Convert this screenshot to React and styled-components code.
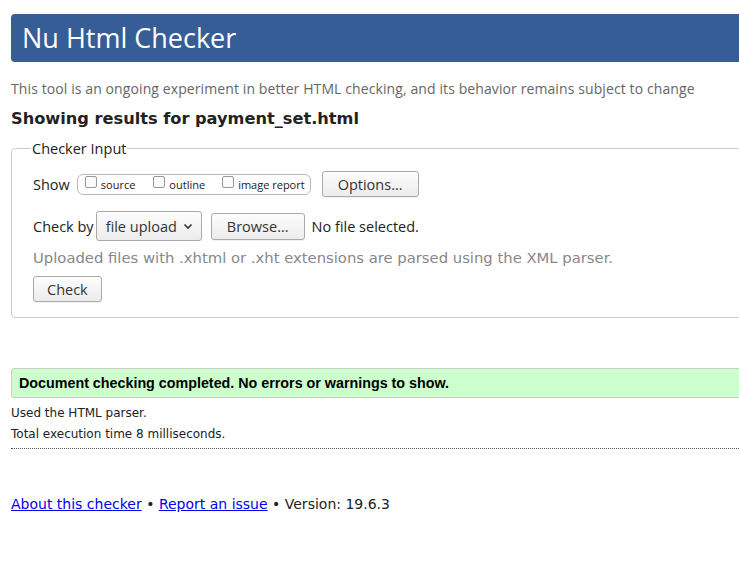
import React from "react";
import styled, { createGlobalStyle } from "styled-components";

const Global = createGlobalStyle`
  html, body { margin: 0; padding: 0; overflow: hidden; background: #fff; }
  body { font-family: "Open Sans", "DejaVu Sans", sans-serif; color: #222; }
`;

const Page = styled.div`
  width: 800px;
  padding: 14px 0 0 11px;
  box-sizing: border-box;
`;

const Header = styled.h1`
  margin: 0;
  height: 48px;
  background: #365d95;
  border-radius: 4px;
  color: #fff;
  font-family: "Open Sans", sans-serif;
  font-weight: 400;
  font-size: 27px;
  line-height: 48px;
  padding-left: 11px;
`;

const Intro = styled.p`
  margin: 17px 0 0;
  font-size: 14px;
  line-height: 20px;
  color: #666;
  letter-spacing: 0.1px;
`;

const Results = styled.h2`
  margin: 9px 0 0;
  font-family: "DejaVu Sans", sans-serif;
  font-size: 16.2px;
  font-weight: 700;
  line-height: 22px;
  color: #222;
`;

const Fieldset = styled.fieldset`
  margin: 9px 0 0;
  border: 1px solid #ccc;
  border-radius: 4px;
  padding: 9px 0 15px 21px;
`;

const Legend = styled.legend`
  font-size: 14.5px;
  padding: 0 1px;
  margin-left: -2px;
  color: #222;
`;

const Row = styled.div`
  display: flex;
  align-items: center;
  margin-top: ${(p) => p.$mt || 0}px;
  font-size: 14.5px;
  color: #222;
`;

const Label = styled.span`
  margin-right: ${(p) => p.$mr || 0}px;
  margin-left: ${(p) => p.$ml || 0}px;
`;

const CheckGroup = styled.div`
  display: flex;
  align-items: center;
  height: 19px;
  border: 1px solid #bbb;
  border-radius: 6px;
  padding: 0 5px 0 7px;
  margin-right: 11px;
`;

const CheckItem = styled.label`
  display: flex;
  align-items: center;
  font-size: 11px;
  margin-right: ${(p) => p.$mr || 0}px;
  color: #222;
`;

const Box = styled.span`
  width: 10px;
  height: 10px;
  border: 1px solid #999;
  border-radius: 2px;
  background: #fafafa;
  margin-right: 4px;
  margin-top: -4px;
`;

const Button = styled.button`
  height: ${(p) => p.$h || 26}px;
  padding: 0 ${(p) => p.$px || 13}px;
  border: 1px solid #aaa;
  border-radius: 3px;
  background: linear-gradient(#fdfdfd, #ececec);
  font-family: "Open Sans", sans-serif;
  font-size: 14.5px;
  color: #333;
  box-shadow: 0 1px 0 rgba(0,0,0,0.05);
`;

const Select = styled.div`
  display: flex;
  align-items: center;
  height: 28px;
  padding: 0 8px 0 9px;
  border: 1px solid #aaa;
  border-radius: 3px;
  background: linear-gradient(#fdfdfd, #ececec);
  color: #333;
  gap: 6px;
  margin-right: 9px;
`;

const Note = styled.p`
  margin: 8px 0 0;
  font-family: "DejaVu Sans", sans-serif;
  font-size: 14.8px;
  color: #888;
  line-height: 18px;
`;

const Success = styled.div`
  margin-top: 50px;
  height: 28px;
  background: #ccffcc;
  border: 1px solid #ccc;
  border-radius: 3px 0 0 3px;
  font-family: "Liberation Sans", Arial, sans-serif;
  font-weight: 700;
  font-size: 14.3px;
  line-height: 28px;
  padding-left: 7px;
  color: #000;
`;

const Small = styled.p`
  margin: ${(p) => p.$mt || 0}px 0 0;
  font-family: "DejaVu Sans", sans-serif;
  font-size: 12px;
  line-height: 16px;
  color: #222;
`;

const Rule = styled.hr`
  margin: 6px 0 0;
  border: 0;
  border-top: 1px dotted #555;
  width: 728px;
`;

const Footer = styled.p`
  margin: 47px 0 0;
  font-family: "DejaVu Sans", sans-serif;
  font-size: 14px;
  color: #222;
  a { color: #00e; text-decoration: underline; }
`;

const Chevron = () => (
  <svg width="10" height="7" viewBox="0 0 10 7">
    <path d="M1.5 1.5 L5 5 L8.5 1.5" fill="none" stroke="#333" strokeWidth="1.6" />
  </svg>
);

export default function App() {
  return (
    <>
      <Global />
      <Page>
        <Header>Nu Html Checker</Header>
        <Intro>This tool is an ongoing experiment in better HTML checking, and its behavior remains subject to change</Intro>
        <Results>Showing results for payment_set.html</Results>
        <Fieldset>
          <Legend>Checker Input</Legend>
          <Row $mt={4}>
            <Label $mr={7}>Show</Label>
            <CheckGroup>
              <CheckItem $mr={18}><Box />source</CheckItem>
              <CheckItem $mr={17}><Box />outline</CheckItem>
              <CheckItem><Box />image report</CheckItem>
            </CheckGroup>
            <Button $px={15}>Options...</Button>
          </Row>
          <Row $mt={14}>
            <Label $mr={2}>Check by</Label>
            <Select>file upload <Chevron /></Select>
            <Button $h={27} $px={15}>Browse...</Button>
            <Label $ml={7}>No file selected.</Label>
          </Row>
          <Note>Uploaded files with .xhtml or .xht extensions are parsed using the XML parser.</Note>
          <Row $mt={9}>
            <Button $px={13}>Check</Button>
          </Row>
        </Fieldset>
        <Success>Document checking completed. No errors or warnings to show.</Success>
        <Small $mt={7}>Used the HTML parser.</Small>
        <Small $mt={5}>Total execution time 8 milliseconds.</Small>
        <Rule />
        <Footer>
          <a href="#">About this checker</a> • <a href="#">Report an issue</a> • Version: 19.6.3
        </Footer>
      </Page>
    </>
  );
}
